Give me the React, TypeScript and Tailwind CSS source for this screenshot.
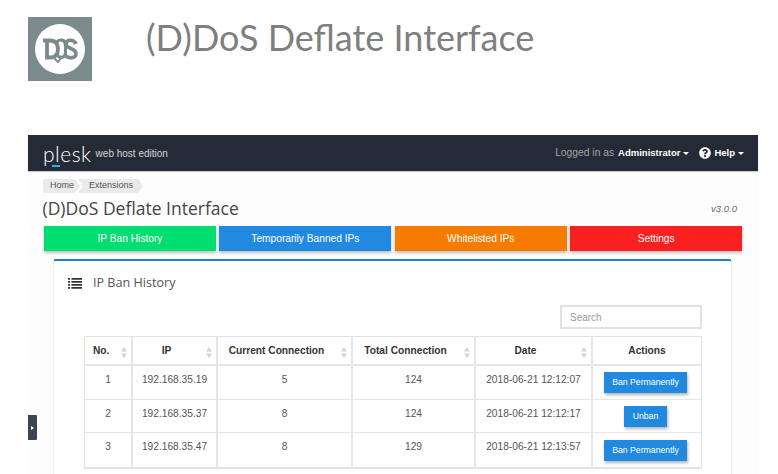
import { FaQuestionCircle } from "react-icons/fa";

const rows = [
  { no: 1, ip: "192.168.35.19", current: 5, total: 124, date: "2018-06-21 12:12:07", action: "Ban Permanently" },
  { no: 2, ip: "192.168.35.37", current: 8, total: 124, date: "2018-06-21 12:12:17", action: "Unban" },
  { no: 3, ip: "192.168.35.47", current: 8, total: 129, date: "2018-06-21 12:13:57", action: "Ban Permanently" },
];

const tabs = [
  { label: "IP Ban History", color: "bg-[#00de72]" },
  { label: "Temporarily Banned IPs", color: "bg-[#2289e0]" },
  { label: "Whitelisted IPs", color: "bg-[#f57c00]" },
  { label: "Settings", color: "bg-[#f92020]" },
];

const columns = [
  { label: "No.", w: "w-[48px]", pad: "pl-2 justify-start" },
  { label: "IP", w: "w-[85px]", pad: "pr-[16px] justify-center" },
  { label: "Current Connection", w: "w-[135px]", pad: "pr-[16px] justify-center" },
  { label: "Total Connection", w: "w-[123px]", pad: "pr-[16px] justify-center" },
  { label: "Date", w: "w-[117px]", pad: "pr-[16px] justify-center" },
  { label: "Actions", w: "w-[108px]", pad: "justify-center", noSort: true },
];

function SortIcon() {
  return (
    <svg width="6" height="11" viewBox="0 0 6 11" className="absolute right-[4px] top-[10px]">
      <path d="M3 0 L6 4.5 H0 Z" fill="#d0d4d8" />
      <path d="M3 11 L6 6.5 H0 Z" fill="#d0d4d8" />
    </svg>
  );
}

function ListIcon() {
  return (
    <svg width="14" height="11" viewBox="0 0 14 11" fill="#333">
      <path d="M0 0h2v1.8H0zM3.4 0H14v1.8H3.4zM0 3h2v1.8H0zM3.4 3H14v1.8H3.4zM0 6h2v1.8H0zM3.4 6H14v1.8H3.4zM0 9h2v1.8H0zM3.4 9H14v1.8H3.4z" />
    </svg>
  );
}

function Caret() {
  return <span className="ml-[3px] inline-block h-0 w-0 border-x-[3px] border-t-[3px] border-x-transparent border-t-white align-middle" />;
}

function Logo() {
  return (
    <div className="flex h-[64px] w-[64px] shrink-0 items-center justify-center bg-[#7b8a8b]">
      <svg width="50" height="50" viewBox="0 0 50 50">
        <circle cx="25" cy="25" r="25" fill="#fff" />
        <g fill="none" stroke="#7b8a8b">
          <path d="M8 16.5 H15 C21 16.5 23 20 23 25 C23 30.5 20 33.5 15 33.5 H12 V16.5" strokeWidth="3.8" />
          <path d="M26 34 L23 38 L19 34" strokeWidth="2" />
          <path d="M22 18 C24 15 30.5 15 30.5 21 V28 C30.5 35 23 34.5 22 30" strokeWidth="3.2" />
          <path d="M41 20 C39 15 31 15 31 20 C31 25 41 24 41 29.5 C41 35 33 35 30 31" strokeWidth="3.6" />
        </g>
      </svg>
    </div>
  );
}

export default function App() {
  return (
    <div className="h-[474px] w-[778px] overflow-hidden bg-white font-['Liberation_Sans',Arial,sans-serif]">
      <div className="flex h-[135px] items-start pl-[28px] pt-[17px]">
        <Logo />
        <h1 className="-mt-[1px] ml-[54px] font-['Lato',sans-serif] text-[36px] leading-[42px] text-[#7f7f7f]">
          (D)DoS Deflate Interface
        </h1>
      </div>

      <div className="relative ml-[28px] h-[339px] w-[730px] bg-[#fdfdfd]">
        <div className="flex h-[36px] items-center justify-between bg-[#252b36] pl-[15px] pr-[14px] shadow-[0_1px_1px_rgba(0,0,0,0.2)]">
          <div className="flex items-center">
            <span className="relative font-['Lato',sans-serif] text-[21px] font-light leading-none tracking-[0.5px] text-white">
              plesk
              <span className="absolute bottom-[-3px] left-[9px] h-[2px] w-[8px] bg-[#27b3e2]" />
            </span>
            <span className="ml-[4px] mt-[1px] text-[10px] text-[#d4d6d9]">web host edition</span>
          </div>
          <div className="flex items-center">
            <span className="text-[10.3px] text-[#a0a4ab]">Logged in as</span>
            <span className="ml-[4px] text-[9.5px] font-bold text-white">Administrator</span>
            <Caret />
            <FaQuestionCircle className="ml-[10px] h-[12px] w-[12px] text-white" />
            <span className="ml-[3px] text-[9.5px] font-bold text-white">Help</span>
            <Caret />
          </div>
        </div>

        <div className="ml-[15px] mt-[8px] flex text-[9px] text-[#555]">
          <span className="flex h-[14px] items-center bg-[#eaeaea] pl-[7px] pr-[6px] [clip-path:polygon(0_0,calc(100%-5px)_0,100%_50%,calc(100%-5px)_100%,0_100%)]">
            Home
          </span>
          <span className="-ml-[2px] flex h-[14px] items-center bg-[#eaeaea] pl-[11px] pr-[10px] [clip-path:polygon(0_0,calc(100%-5px)_0,100%_50%,calc(100%-5px)_100%,0_100%,5px_50%)]">
            Extensions
          </span>
        </div>

        <div className="ml-[14.5px] mr-[21px] mt-[3px] flex items-start justify-between">
          <h2 className="font-['Open_Sans',sans-serif] text-[17.5px] leading-[24px] text-[#444]">(D)DoS Deflate Interface</h2>
          <span className="mt-[6px] text-[9.5px] italic text-[#666]">v3.0.0</span>
        </div>

        <div className="ml-[16px] mt-[6px] flex gap-[3.4px]">
          {tabs.map((t) => (
            <div
              key={t.label}
              className={`flex h-[25px] w-[172px] items-center justify-center text-[10.2px] text-white shadow-[0_2px_3px_rgba(0,0,0,0.25)] ${t.color}`}
            >
              {t.label}
            </div>
          ))}
        </div>

        <div className="ml-[25px] mt-[8px] h-[300px] w-[679px] rounded-t-[3px] border-x border-t-2 border-x-[#f0f0f0] border-t-[#1e7fc2] bg-white pl-[14px]">
          <div className="mt-[12px] flex items-center text-[#555]">
            <ListIcon />
            <span className="ml-[11px] font-['Open_Sans',sans-serif] text-[12.6px] leading-[20px]">IP Ban History</span>
          </div>

          <div className="mr-[29px] mt-[12px] flex justify-end">
            <div className="flex h-[24px] w-[142px] items-center border-2 border-[#e2e2e2] pl-[8px] text-[10px] text-[#999]">Search</div>
          </div>

          <div className="ml-[16px] mt-[7px] w-[618px] border border-[#e3e3e3] shadow-[0_1px_1px_rgba(0,0,0,0.1)]">
            <div className="flex h-[29px] border-b-2 border-[#e6e6e6]">
              {columns.map((c) => (
                <div
                  key={c.label}
                  className={`relative flex items-center border-r-2 border-[#e6e6e6] text-[10.2px] font-bold text-[#333] last:border-r-0 ${c.w} ${c.pad}`}
                >
                  {c.label}
                  {!c.noSort && <SortIcon />}
                </div>
              ))}
            </div>
            {rows.map((r) => (
              <div key={r.no} className="flex h-[33.5px] border-b border-[#e6e6e6] text-[10.2px] text-[#555] last:border-b-0">
                <div className={`border-r-2 border-[#e6e6e6] pt-[6px] text-center ${columns[0].w}`}>{r.no}</div>
                <div className={`border-r-2 border-[#e6e6e6] pt-[6px] text-center ${columns[1].w}`}>{r.ip}</div>
                <div className={`border-r-2 border-[#e6e6e6] pt-[6px] text-center ${columns[2].w}`}>{r.current}</div>
                <div className={`border-r-2 border-[#e6e6e6] pt-[6px] text-center ${columns[3].w}`}>{r.total}</div>
                <div className={`border-r-2 border-[#e6e6e6] pt-[6px] text-center ${columns[4].w}`}>{r.date}</div>
                <div className={`flex items-center justify-center pr-[3px] pt-[1px] ${columns[5].w}`}>
                  <span className="flex h-[21px] items-center bg-[#2289e0] px-[8.5px] text-[8.7px] text-white shadow-[1px_2px_3px_rgba(0,0,0,0.3)]">
                    {r.action}
                  </span>
                </div>
              </div>
            ))}
          </div>
        </div>

        <div className="absolute left-0 top-[280px] flex h-[25px] w-[9px] items-center justify-center rounded-r-[1px] bg-[#3c4650]">
          <span className="h-0 w-0 border-y-[2px] border-l-[3px] border-y-transparent border-l-white" />
        </div>
      </div>
    </div>
  );
}
